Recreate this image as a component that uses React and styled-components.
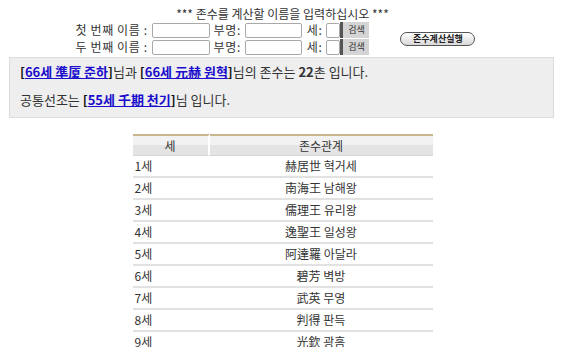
import React from 'react';
import styled, { createGlobalStyle } from 'styled-components';

const GlobalStyle = createGlobalStyle`
  html, body {
    margin: 0;
    padding: 0;
    background: #ffffff;
    font-family: "Noto Sans CJK KR", "Noto Sans", sans-serif;
    color: #333333;
  }
`;

const Page = styled.div`
  width: 565px;
  padding-top: 5px;
`;

const Title = styled.div`
  text-align: center;
  font-size: 12px;
  line-height: 17px;
  color: #333;
`;

const FormArea = styled.div`
  display: flex;
  justify-content: center;
  align-items: center;
  gap: 31px;
  padding-right: 14px;
`;

const Rows = styled.div`
  display: flex;
  flex-direction: column;
  gap: 1px;
`;

const FormRow = styled.div`
  display: flex;
  align-items: center;
  height: 16px;
  font-size: 12px;
  line-height: 16px;
  color: #333;
`;

const Label = styled.span`
  margin: 0 4px 0 ${({ gap }) => gap || 0}px;
  white-space: nowrap;
  line-height: 16px;
  letter-spacing: 0.6px;
`;

const Field = styled.input`
  box-sizing: border-box;
  width: ${({ w }) => w}px;
  height: 15px;
  border: 1px solid #a9a9a9;
  border-radius: 2px;
  padding: 0;
  margin: 0;
  background: #fff;
`;

const SearchButton = styled.button`
  box-sizing: border-box;
  width: 29px;
  height: 16px;
  padding: 0;
  margin: 0;
  border: none;
  border-left: 3px solid #555;
  background: #d4d4d4;
  font-family: "Noto Sans CJK KR", sans-serif;
  font-size: 9px;
  line-height: 14px;
  color: #333;
`;

const PillButton = styled.button`
  box-sizing: border-box;
  width: 75px;
  height: 14px;
  margin-top: 1px;
  padding: 0;
  border: 1px solid #555;
  border-radius: 7px;
  background: linear-gradient(#ffffff, #d8d8d8);
  font-family: "Noto Sans CJK KR", sans-serif;
  font-size: 9px;
  font-weight: bold;
  line-height: 12px;
  color: #222;
`;

const ResultBox = styled.div`
  box-sizing: border-box;
  width: 545px;
  height: 61px;
  margin: 2px 0 0 9px;
  padding: 5px 10px 0;
  background: #eeeeee;
  border: 1px solid #dcdcdc;
  font-size: 13px;
  color: #333;
`;

const Line = styled.div`
  line-height: 18px;
  margin-bottom: ${({ mb }) => mb || 0}px;
`;

const Bracket = styled.b`
  color: #111;
`;

const Person = styled.a`
  color: #1a0dcc;
  font-weight: bold;
  text-decoration: underline;
`;

const Table = styled.table`
  width: 300px;
  margin: 16px auto 0;
  border-collapse: separate;
  border-spacing: 0;
  font-size: 12px;
  color: #333;
`;

const Th = styled.th`
  height: 19px;
  padding: 0;
  font-weight: normal;
  border-top: 2px solid #c9b68c;
  border-bottom: 1px solid #d6d6d6;
  border-right: ${({ divider }) => (divider ? '2px solid #fff' : 'none')};
  background: linear-gradient(#f2f2f2 50%, #e4e4e4 50%);
  width: ${({ w }) => (w ? `${w}px` : 'auto')};
  line-height: 19px;
`;

const Td = styled.td`
  height: 20px;
  padding: 0 ${({ left }) => (left ? '2px' : '0')};
  text-align: ${({ left }) => (left ? 'left' : 'center')};
  border-bottom: 2px solid #e2e2e2;
  line-height: 20px;
`;

const ROWS = [
  ['1세', '赫居世 혁거세'],
  ['2세', '南海王 남해왕'],
  ['3세', '儒理王 유리왕'],
  ['4세', '逸聖王 일성왕'],
  ['5세', '阿達羅 아달라'],
  ['6세', '碧芳 벽방'],
  ['7세', '武英 무영'],
  ['8세', '判得 판득'],
  ['9세', '光欽 광흠'],
];

function NameRow({ label }) {
  return (
    <FormRow>
      <Label>{label}</Label>
      <Field w={58} />
      <Label gap={4}>부명:</Label>
      <Field w={57} />
      <Label gap={5}>세:</Label>
      <Field w={14} />
      <SearchButton>검색</SearchButton>
    </FormRow>
  );
}

export default function App() {
  return (
    <Page>
      <GlobalStyle />
      <Title>*** 존수를 계산할 이름을 입력하십시오 ***</Title>
      <FormArea>
        <Rows>
          <NameRow label="첫 번째 이름 :" />
          <NameRow label="두 번째 이름 :" />
        </Rows>
        <PillButton>존수계산실행</PillButton>
      </FormArea>
      <ResultBox>
        <Line mb={10}>
          <Bracket>[</Bracket><Person>66세 準厦 준하</Person><Bracket>]</Bracket>님과{' '}
          <Bracket>[</Bracket><Person>66세 元赫 원혁</Person><Bracket>]</Bracket>님의 존수는{' '}
          <b>22</b>촌 입니다.
        </Line>
        <Line>
          공통선조는 <Bracket>[</Bracket><Person>55세 千期 천기</Person><Bracket>]</Bracket>님 입니다.
        </Line>
      </ResultBox>
      <Table>
        <thead>
          <tr>
            <Th w={75} divider>세</Th>
            <Th>존수관계</Th>
          </tr>
        </thead>
        <tbody>
          {ROWS.map(([gen, name]) => (
            <tr key={gen}>
              <Td left>{gen}</Td>
              <Td>{name}</Td>
            </tr>
          ))}
        </tbody>
      </Table>
    </Page>
  );
}
